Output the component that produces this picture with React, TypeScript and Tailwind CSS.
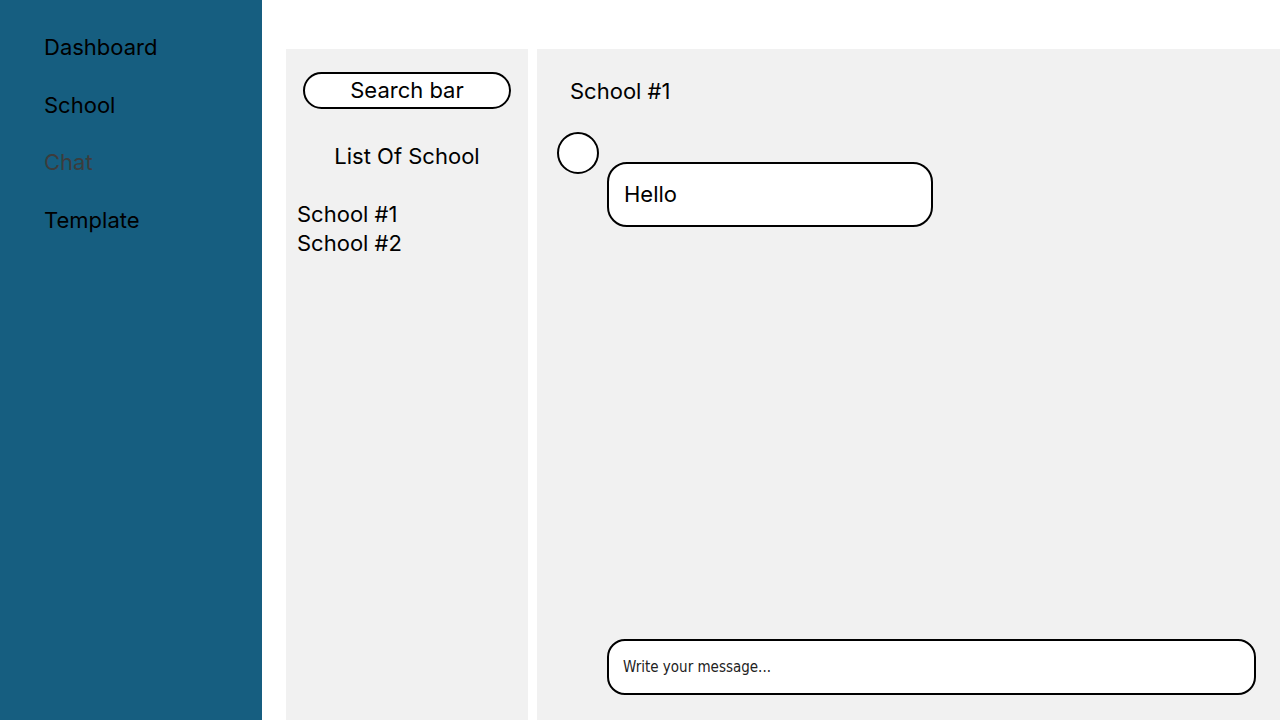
import React from "react";

export default function App() {
  const font = { fontFamily: "Inter, 'Noto Sans', sans-serif" };
  return (
    <div className="flex h-[720px] w-[1280px] bg-white overflow-hidden" style={font}>
      <aside className="w-[262px] shrink-0 bg-[#165e80] pl-[44px] pt-[32px] flex flex-col gap-[27.5px]">
        <div className="text-[22px] leading-[30px] text-black">Dashboard</div>
        <div className="text-[22px] leading-[30px] text-black">School</div>
        <div className="text-[22px] leading-[30px] text-[#3c3c3c]">Chat</div>
        <div className="text-[22px] leading-[30px] text-black">Template</div>
      </aside>
      <div className="flex-1 flex pl-[24px] pt-[49px] gap-[9px]">
        <section className="w-[242px] bg-[#f1f1f1] flex flex-col">
          <div className="mx-[17px] mt-[23px] h-[37px] rounded-full border-2 border-black bg-white flex items-center justify-center text-[22px] text-black">
            Search bar
          </div>
          <div className="mt-[33px] text-center text-[22px] leading-[28px] text-black">List Of School</div>
          <div className="mt-[30px] pl-[11px] flex flex-col text-[22px] leading-[29px] text-black">
            <div>School #1</div>
            <div>School #2</div>
          </div>
        </section>
        <section className="flex-1 bg-[#f1f1f1] flex flex-col pl-[20px] pr-[24px]">
          <div className="mt-[27px] pl-[13px] text-[22px] leading-[30px] text-black">School #1</div>
          <div className="mt-[26px] flex items-start">
            <div className="w-[42px] h-[42px] rounded-full border-2 border-black bg-white shrink-0" />
            <div className="mt-[30px] ml-[8px] w-[326px] h-[65px] rounded-[20px] border-2 border-black bg-white flex items-center pl-[15px] text-[22px] text-black">
              Hello
            </div>
          </div>
          <div className="flex-1" />
          <div className="ml-[50px] mb-[25px] h-[56px] rounded-[18px] border-2 border-black bg-white flex items-center pl-[14px] text-[15px] text-[#222]" style={{ fontFamily: "'DejaVu Sans Condensed', 'Liberation Sans', sans-serif" }}>
            Write your message...
          </div>
        </section>
      </div>
    </div>
  );
}
